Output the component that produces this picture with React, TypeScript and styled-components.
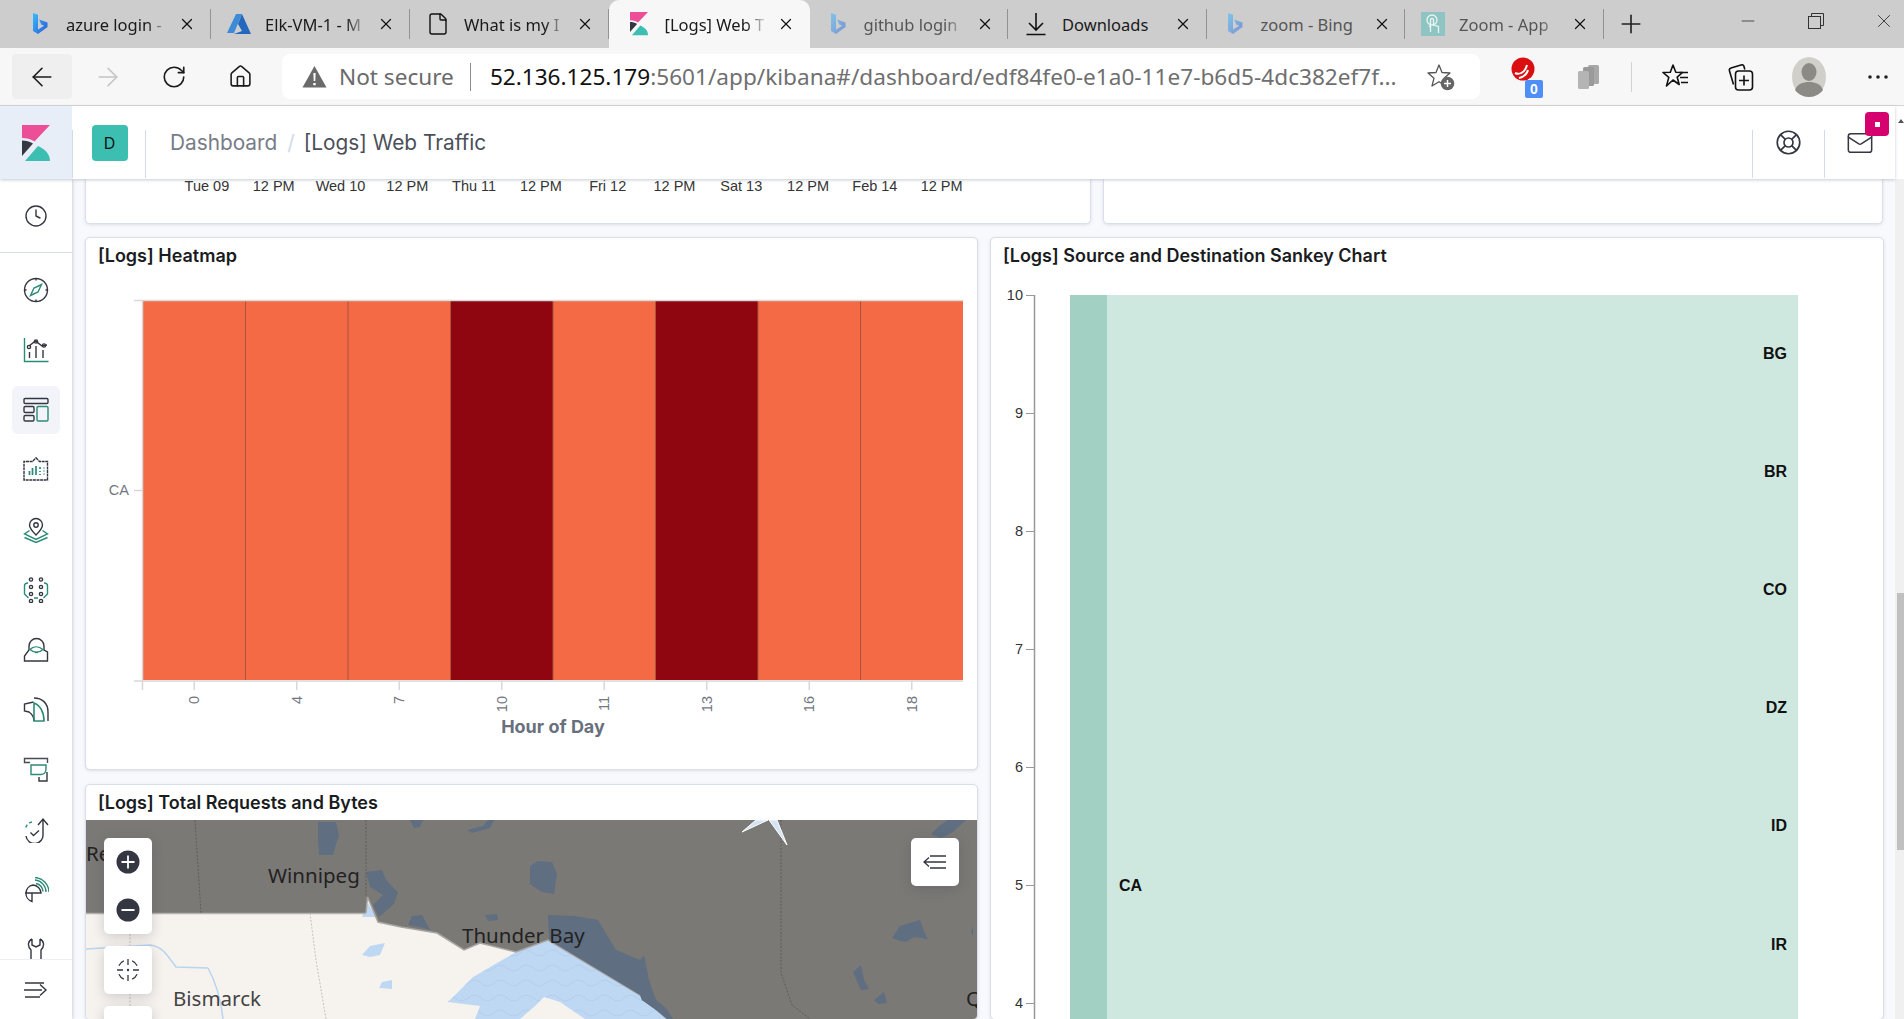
import React from 'react';
import styled, { createGlobalStyle } from 'styled-components';
import { ArrowLeft, ArrowRight, Clock, File, House, LifeBuoy, Mail, Minus, Plus, RotateCw, X } from 'lucide-react';

const Dark = '#343741';
const Teal = '#2b8a78';
const ChromeFont = '"Noto Sans", "Open Sans", sans-serif';
const UiFont = 'Inter, "Noto Sans", sans-serif';
const ChartFont = '"Liberation Sans", Arial, sans-serif';

const GlobalStyle = createGlobalStyle`
	html, body {
		margin: 0;
		padding: 0;
		overflow: hidden;
		background: #fff;
	}
`;

const Page = styled.div`
	width: 1904px;
	height: 1019px;
	display: flex;
	flex-direction: column;
	overflow: hidden;
`;

/* browser chrome */

const TabStrip = styled.div`
	height: 48px;
	flex: none;
	display: flex;
	padding-left: 12px;
	background: #cdcdcd;
	font-family: ${ChromeFont};
`;

const Tab = styled.div<{ active?: boolean; early?: boolean }>`
	position: relative;
	width: ${p => p.active ? 200.5 : p.early ? 199 : 198.5}px;
	flex: none;
	box-sizing: border-box;
	padding-left: ${p => p.active ? 1.5 : 0}px;
	display: flex;
	align-items: center;
	background: ${p => p.active ? '#f7f7f7' : 'transparent'};
	border-radius: 10px 10px 0 0;

	${p => p.active ? '' : `
		&::after {
			content: '';
			position: absolute;
			right: 0;
			top: 9px;
			height: 30px;
			width: 1px;
			background: #929292;
		}
	`}
`;

const TabIcon = styled.div<{ faded?: boolean }>`
	width: 26px;
	height: 26px;
	margin-left: 15px;
	flex: none;
	display: flex;
	align-items: center;
	justify-content: center;
	opacity: ${p => p.faded ? .5 : 1};
`;

const TabTitle = styled.div<{ dim?: boolean; plain?: boolean }>`
	width: 112px;
	margin-left: 13px;
	flex: none;
	white-space: nowrap;
	font-size: 16.5px;
	color: ${p => p.dim ? '#555' : '#1a1a1a'};
	${p => p.plain ? '' : `
		mask-image: linear-gradient(to right, #000 72%, transparent 92%);
	`}
`;

const TabClose = styled.div`
	width: 18px;
	flex: none;
	display: flex;
	justify-content: center;
	color: #111;
`;

const NewTab = styled.div`
	width: 54px;
	flex: none;
	display: flex;
	align-items: center;
	justify-content: center;
	color: #222;
`;

const WindowControls = styled.div`
	margin-left: auto;
	margin-right: -14px;
	display: flex;
`;

const WindowButton = styled.div`
	width: 68px;
	display: flex;
	align-items: center;
	justify-content: center;
	padding-bottom: 6px;
	color: #333;
`;

const Toolbar = styled.div`
	height: 58px;
	flex: none;
	display: flex;
	align-items: flex-start;
	padding: 6px 0 0 12px;
	box-sizing: border-box;
	background: #f7f7f7;
	border-bottom: 1px solid #d4d4d4;
	font-family: ${ChromeFont};
`;

const NavButton = styled.div<{ pressed?: boolean; disabled?: boolean }>`
	width: 60px;
	height: 45px;
	margin-right: 6px;
	flex: none;
	display: flex;
	align-items: center;
	justify-content: center;
	border-radius: 4px;
	background: ${p => p.pressed ? '#efefef' : 'transparent'};
	color: ${p => p.disabled ? '#c4c4c4' : '#1b1b1b'};
`;

const AddressBar = styled.div`
	width: 1198px;
	height: 45px;
	margin-left: 6px;
	flex: none;
	display: flex;
	align-items: center;
	box-sizing: border-box;
	padding-left: 20px;
	background: #fff;
	border-radius: 8px;
	font-size: 22.6px;
	white-space: nowrap;
`;

const NotSecure = styled.span`
	margin-left: 12px;
	color: #6a6a6a;
`;

const AddressDivider = styled.span`
	width: 1px;
	height: 28px;
	margin: 0 19px 0 16px;
	background: #8c8c8c;
`;

const Host = styled.span`
	color: #111;
`;

const UrlRest = styled.span`
	color: #6f6f6f;
`;

const FavAddSlot = styled.div`
	margin-left: 30px;
	display: flex;
`;

const ToolCell = styled.div<{ shift?: number }>`
	width: 66px;
	height: 45px;
	margin-left: ${p => p.shift || 0}px;
	flex: none;
	display: flex;
	align-items: center;
	justify-content: center;
`;

const ToolSep = styled.div`
	width: 1px;
	height: 30px;
	margin: 8px 10px 0 9px;
	flex: none;
	background: #d2d2d2;
`;

const ExtensionGroup = styled.div`
	margin-left: 10px;
	display: flex;
`;

/* kibana header */

const KibanaHeader = styled.div`
	position: relative;
	z-index: 2;
	height: 73px;
	flex: none;
	box-sizing: border-box;
	display: flex;
	align-items: flex-end;
	background: #fff;
	margin-right: 9px;
	box-shadow: 0 1px 3px rgba(152, 162, 179, .55);
	font-family: ${UiFont};
`;

const LogoBlock = styled.div`
	width: 72px;
	height: 73px;
	flex: none;
	display: flex;
	align-items: center;
	justify-content: center;
	background: #e7eef7;
`;

const HeaderSep = styled.div`
	width: 1px;
	height: 48px;
	margin-bottom: 1px;
	flex: none;
	background: #d3dae6;
`;

const SpaceCell = styled.div`
	height: 73px;
	width: 72px;
	flex: none;
	display: flex;
	align-items: center;
	justify-content: center;
`;

const SpaceBadge = styled.div`
	width: 36px;
	height: 36px;
	margin-left: 1px;
	display: flex;
	align-items: center;
	justify-content: center;
	border-radius: 4px;
	background: #3cbfb0;
	color: #111;
	font-size: 16px;
`;

const Breadcrumbs = styled.div`
	height: 73px;
	margin-left: 24px;
	flex: 1;
	display: flex;
	align-items: center;
	font-size: 20.8px;
	padding-bottom: 1px;
	box-sizing: border-box;
`;

const Crumb = styled.span<{ current?: boolean }>`
	color: ${p => p.current ? '#4b4f59' : '#777c87'};
`;

const CrumbSlash = styled.span`
	margin: 0 9px 0 10px;
	color: #d3dae6;
`;

const HeaderAction = styled.div<{ wide?: boolean }>`
	position: relative;
	height: 73px;
	width: ${p => p.wide ? 71 : 70}px;
	flex: none;
	display: flex;
	align-items: center;
	justify-content: center;
	color: ${Dark};
`;

const MailBadge = styled.div`
	position: absolute;
	top: 6px;
	right: 6px;
	width: 24px;
	height: 24px;
	display: flex;
	align-items: center;
	justify-content: center;
	border-radius: 4px;
	background: #d6006e;

	&::after {
		content: '';
		width: 5px;
		height: 5px;
		background: #fff;
	}
`;

/* page body */

const Body = styled.div`
	flex: 1;
	min-height: 0;
	display: flex;
`;

const Rail = styled.div`
	position: relative;
	z-index: 1;
	width: 72px;
	flex: none;
	display: flex;
	flex-direction: column;
	overflow: hidden;
	background: #fff;
	box-shadow: 1px 0 3px rgba(152, 162, 179, .45);
`;

const RecentSection = styled.div`
	height: 74px;
	flex: none;
	display: flex;
	align-items: center;
	justify-content: center;
	border-bottom: 1px solid #d3dae6;
	box-sizing: border-box;
	color: ${Dark};
`;

const RailList = styled.div`
	flex: 1;
	min-height: 0;
	padding-top: 7px;
	overflow: hidden;
	display: flex;
	flex-direction: column;
`;

const RailItem = styled.div<{ active?: boolean }>`
	height: 60px;
	flex: none;
	display: flex;
	align-items: center;
	justify-content: center;

	${p => p.active ? `
		&::before {
			content: '';
			position: absolute;
			width: 48px;
			height: 48px;
			border-radius: 6px;
			background: #f2f4f9;
		}
	` : ''}
`;

const RailFooter = styled.div`
	height: 59px;
	flex: none;
	display: flex;
	align-items: center;
	justify-content: center;
	border-top: 1px solid #eceff4;
	background: #fff;
`;

const RailSvg = styled.svg`
	position: relative;
	width: 26px;
	height: 26px;
	fill: none;
	stroke: ${Dark};
	stroke-width: 1.4;
`;

const Content = styled.div`
	flex: 1;
	min-width: 0;
	overflow: hidden;
	box-sizing: border-box;
	padding-left: 13px;
	background: #f8f9fc;
	display: flex;
	flex-direction: column;
	gap: 13px;
`;

const TopRow = styled.div`
	height: 45px;
	flex: none;
	display: flex;
	gap: 12px;
`;

const TopPanel = styled.div<{ wide?: boolean }>`
	width: ${p => p.wide ? 1006 : 780}px;
	height: 45px;
	flex: none;
	display: flex;
	box-sizing: border-box;
	padding-left: 87.500px;
	background: #fff;
	border: 1px solid #d9deea;
	border-top: 0;
	border-radius: 0 0 5px 5px;
	box-shadow: 0 1px 3px rgba(152, 162, 179, .3);
`;

const TimeLabel = styled.div`
	width: 66.8px;
	flex: none;
	text-align: center;
	font-family: ${ChartFont};
	font-size: 14.5px;
	line-height: 14px;
	color: #333;
	white-space: nowrap;
`;

const Columns = styled.div`
	flex: 1;
	min-height: 0;
	display: flex;
	gap: 12px;
`;

const Column = styled.div<{ wide?: boolean }>`
	width: ${p => p.wide ? 894 : 893}px;
	flex: none;
	display: flex;
	flex-direction: column;
	gap: 14px;
`;

const Panel = styled.div<{ height?: number }>`
	${p => p.height ? `height: ${p.height}px;` : ''}
	flex: none;
	box-sizing: border-box;
	background: #fff;
	border: 1px solid #d9deea;
	border-radius: 5px;
	box-shadow: 0 1px 3px rgba(152, 162, 179, .3);
	overflow: hidden;
`;

const PanelTitle = styled.div`
	height: 34px;
	box-sizing: border-box;
	padding: 6px 0 0 12px;
	font-family: ${UiFont};
	font-size: 18px;
	line-height: 24px;
	font-weight: 600;
	color: #1a1c21;
	white-space: nowrap;
`;

const ChartSvg = styled.svg`
	display: block;
	width: 100%;
`;

const Scrollbar = styled.div`
	width: 9px;
	flex: none;
	position: relative;
	background: #f0f0f0;
`;

const ScrollTrack = styled.div`
	height: 100%;
	box-sizing: border-box;
	padding: 414px 0 0 2px;
`;

const ScrollThumb = styled.div`
	height: 257px;
	background: #c0c0c0;
`;

const ScrollArrow = styled.div`
	position: absolute;
	top: -60px;
	left: 3px;
	width: 0;
	height: 0;
	border-left: 3px solid transparent;
	border-right: 3px solid transparent;
	border-bottom: 4px solid #555;
`;

/* map overlay parts */

const MapFrame = styled.div`
	position: relative;
	height: 199px;
	margin-top: 1px;
	overflow: hidden;
`;

const MapControls = styled.div`
	position: absolute;
	top: 18px;
	left: 18px;
	display: flex;
	flex-direction: column;
	gap: 12px;
`;

const MapCard = styled.div<{ tall?: boolean }>`
	width: 48px;
	height: ${p => p.tall ? 96 : 48}px;
	flex: none;
	display: flex;
	flex-direction: column;
	align-items: center;
	justify-content: space-around;
	background: #fff;
	border-radius: 5px;
	box-shadow: 0 3px 12px rgba(60, 60, 70, .22);
`;

const LayersCard = styled(MapCard)`
	position: absolute;
	top: 18px;
	right: 18px;
`;

const MapName = styled.text<{ tone?: string }>`
	font-family: "Noto Sans", "Open Sans", sans-serif;
	font-size: 20.5px;
	fill: ${p => p.tone || '#222'};
`;

const AxisText = styled.text<{ tone?: string }>`
	font-family: ${ChartFont};
	font-size: 14.5px;
	fill: ${p => p.tone || '#74777f'};
`;

const AxisTitle = styled.text`
	font-family: ${UiFont};
	font-size: 18px;
	font-weight: 700;
	fill: #69707d;
`;

const NodeLabel = styled.text`
	font-family: ${ChartFont};
	font-size: 16px;
	font-weight: 700;
	fill: #111;
`;

/* small drawings */

const BingIcon = ({ id }: { id: string }) => (
	<svg width="18" height="24" viewBox="0 0 18 24">
		<defs>
			<linearGradient id={id} x1="0" y1="0" x2="1" y2="1">
				<stop offset="0" stopColor="#37bdff" />
				<stop offset="1" stopColor="#2a5ad8" />
			</linearGradient>
		</defs>
		<path d="M2 1l5 1.800v14.600l6.200-3.600-3-1.400-2-4.800 8.300 2.900v4.600L7 22l-5-3z" fill={`url(#${id})`} />
	</svg>
);

const AzureIcon = () => (
	<svg width="26" height="22" viewBox="0 0 26 22">
		<path d="M10 1h6L8 20H1z" fill="#3d8ad6" />
		<path d="M16 1l9 20H8l8-3-4-7z" fill="#2468bd" />
	</svg>
);

const KibanaLogo = ({ size }: { size: number }) => (
	<svg width={size} height={size * 36 / 28} viewBox="0 0 28 36">
		<path d="M0 0h28L12.500 16.500C9 14 4.500 13 0 13z" fill="#ec4f98" />
		<path d="M0 15.500c4 0 7.800 1 11 3L0 31z" fill="#343741" />
		<path d="M3 36l13-15c7 3 12 8 12 15z" fill="#3cbfb0" />
	</svg>
);

const DownloadIcon = () => (
	<svg width="22" height="24" viewBox="0 0 22 24" fill="none" stroke="#111" strokeWidth="1.600">
		<path d="M11 1v16M4 11l7 7 7-7M1.500 22.500h19" />
	</svg>
);

const ZoomAppIcon = () => (
	<svg width="24" height="24" viewBox="0 0 24 24" fill="none" stroke="#e8f4f3" strokeWidth="1.300">
		<rect width="24" height="24" fill="#8ec5c2" stroke="none" />
		<circle cx="11" cy="8" r="5" />
		<path d="M9.500 20v-5l-1.500-1M9.500 15V8a1.500 1.500 0 0 1 3 0v5l5 1.500V21" />
	</svg>
);

const WarningIcon = () => (
	<svg width="25" height="23" viewBox="0 0 25 23">
		<path d="M12.500 1L24.500 22.500H.5z" fill="#6a6a6a" />
		<path d="M11.400 8h2.200l-.3 8h-1.600zM11.300 18h2.400v2.200h-2.400z" fill="#fff" />
	</svg>
);

const FavAddIcon = () => (
	<svg width="28" height="28" viewBox="0 0 28 28" fill="none">
		<path d="M12 2l3 7.500 8 .5-6 5.200 2 7.800-7-4.300-7 4.300 2-7.800-6-5.200 8-.5z" stroke="#555" strokeWidth="1.300" strokeLinejoin="round" />
		<circle cx="20.500" cy="20.500" r="6.800" fill="#666" />
		<path d="M17 20.500h7M20.500 17v7" stroke="#fff" strokeWidth="1.500" />
	</svg>
);

const ExtensionRed = () => (
	<svg width="40" height="42" viewBox="0 0 40 42">
		<circle cx="20" cy="13" r="11.500" fill="#d90f12" />
		<path d="M12 17c4 2 10 0 12-8M16 22c4-1 8-4 9-8" fill="none" stroke="#fff" strokeWidth="2" />
		<rect x="22" y="24" width="18" height="18" rx="2" fill="#4f8ef7" />
		<text x="31" y="38" textAnchor="middle" fontFamily={ChartFont} fontSize="14" fontWeight="700" fill="#fff">0</text>
	</svg>
);

const ExtensionCopies = () => (
	<svg width="24" height="26" viewBox="0 0 24 26">
		<rect x="11" y="1" width="11" height="19" rx="1.500" fill="#a8a8a8" />
		<rect x="6" y="3" width="11" height="19" rx="1.500" fill="#9a9a9a" />
		<rect x="1" y="7" width="11" height="18" rx="1.500" fill="#b4b4b4" />
	</svg>
);

const FavoritesIcon = () => (
	<svg width="27" height="28" viewBox="0 0 27 28" fill="none" stroke="#111" strokeWidth="1.600">
		<path d="M11 2l2.800 7.200 6.700.3-5.300 4.700 2 7.300L11 17l-6.500 6 2.300-8.600L1 9.500l7.300-.3z" strokeLinejoin="round" />
		<path d="M17.500 9.500H26M18 14.500h8M19 19.500h7" />
	</svg>
);

const CollectionsIcon = () => (
	<svg width="26" height="30" viewBox="0 0 26 30" fill="none" stroke="#111" strokeWidth="1.600">
		<path d="M5.500 22.500L1.500 9c-.5-1.500 0-2.500 1.500-3l10-3c1.500-.4 2.600 0 3 1.500l.8 3" />
		<rect x="7.500" y="9" width="17" height="19" rx="3" />
		<path d="M16 13.500v10M11 18.500h10" />
	</svg>
);

const Avatar = () => (
	<svg width="34" height="40" viewBox="0 0 34 40">
		<ellipse cx="17" cy="20" rx="17" ry="20" fill="#d0cfca" />
		<ellipse cx="17" cy="15" rx="7.500" ry="9" fill="#8c8a85" />
		<path d="M3 33c2-6 8-8 14-8s12 2 14 8c-3 4-8 7-14 7S6 37 3 33z" fill="#8c8a85" />
	</svg>
);

const DotsIcon = () => (
	<svg width="22" height="6" viewBox="0 0 22 6" fill="#222">
		<circle cx="3" cy="3" r="1.800" />
		<circle cx="11" cy="3" r="1.800" />
		<circle cx="19" cy="3" r="1.800" />
	</svg>
);

const RestoreIcon = () => (
	<svg width="16" height="16" viewBox="0 0 16 16" fill="none" stroke="#333" strokeWidth="1">
		<rect x=".5" y="3.500" width="12" height="12" />
		<path d="M3.500 3.500V.5h12v12h-3" />
	</svg>
);

const RoundGlyph = ({ minus }: { minus?: boolean }) => (
	<svg width="24" height="24" viewBox="0 0 24 24">
		<circle cx="12" cy="12" r="11.500" fill={Dark} />
		<path d={minus ? 'M5.500 12h13' : 'M5.500 12h13M12 5.500v13'} stroke="#fff" strokeWidth="1.800" />
	</svg>
);

const LocateIcon = () => (
	<svg width="24" height="24" viewBox="0 0 24 24" fill="none" stroke={Dark} strokeWidth="1.300">
		<path d="M12 1v6M12 17v6M1 12h6M17 12h6" />
		<path d="M16.200 2.900A10 10 0 0 1 21.100 7.800M21.100 16.200A10 10 0 0 1 16.200 21.100M7.800 21.100A10 10 0 0 1 2.900 16.200M2.900 7.800A10 10 0 0 1 7.800 2.900" />
		<circle cx="12" cy="12" r="1.200" fill={Dark} stroke="none" />
	</svg>
);

const LayersToggleIcon = () => (
	<svg width="24" height="18" viewBox="0 0 24 18" fill="none" stroke={Dark} strokeWidth="1.300">
		<path d="M7 3H23M1 9h22M7 15h16M6 4.500L1 9l5 4.500" />
	</svg>
);

const railIcons = [
	// discover
	<RailSvg viewBox="0 0 26 26" key="discover">
		<circle cx="13" cy="13" r="11.500" />
		<path d="M13 1.500v2M13 22.500v2M1.500 13h2M22.500 13h2" />
		<path d="M18.500 7.500L15 15l-7.500 3.500L11 11z" stroke={Teal} />
	</RailSvg>,
	// visualize
	<RailSvg viewBox="0 0 26 26" key="visualize">
		<path d="M1.500 1v23.500h24" stroke={Teal} />
		<path d="M6 9l6.500-5L19 9l5-1" />
		<circle cx="6" cy="10" r="1.600" /><circle cx="13" cy="4.500" r="1.600" /><circle cx="21" cy="8.500" r="1.600" />
		<path d="M6.500 15v6M13 9v12M20 13v8" />
	</RailSvg>,
	// dashboard
	<RailSvg viewBox="0 0 26 26" key="dashboard">
		<rect x="1" y="1.500" width="24" height="5" rx="1.200" />
		<rect x="1" y="9.500" width="10" height="6" rx="1.200" />
		<rect x="1" y="18.500" width="10" height="5.500" rx="1.200" />
		<rect x="14" y="9.500" width="11" height="14.500" rx="1.200" stroke={Teal} />
	</RailSvg>,
	// canvas
	<RailSvg viewBox="0 0 26 26" key="canvas">
		<path d="M13 .8l3.500 3.700h8v18.500H1V4.500h8.500z" strokeDasharray="3 .6" />
		<path d="M6.500 18v-4M9.500 18v-7M13 18v-9M17 10v2M17 14v1M17 17v1M20.500 11h1M20.500 14h1M20.500 17h1" stroke={Teal} strokeWidth="1.700" />
	</RailSvg>,
	// maps
	<RailSvg viewBox="0 0 26 26" key="maps">
		<path d="M13 18c-4-4-6.500-7-6.500-10a6.500 6.500 0 0 1 13 0c0 3-2.500 6-6.500 10z" />
		<circle cx="13" cy="8" r="2.200" />
		<path d="M6.500 13.500L1.500 17l11.500 5.500L24.500 17l-5-3.500M1.500 20.500L13 25.500l11.500-5" stroke={Teal} />
	</RailSvg>,
	// machine learning
	<RailSvg viewBox="0 0 26 26" key="ml">
		<circle cx="8" cy="2.500" r="1.600" /><circle cx="18" cy="2.500" r="1.600" />
		<circle cx="8" cy="10" r="1.600" /><circle cx="18" cy="10" r="1.600" />
		<circle cx="8" cy="17" r="1.600" /><circle cx="18" cy="17" r="1.600" />
		<circle cx="8" cy="24" r="1.600" /><circle cx="18" cy="24" r="1.600" />
		<path d="M5 6C2 6 1.500 7 1.500 9v8l4 4M21 6c3 0 3.500 1 3.500 3v8l-4 4M11 21h4" stroke={Teal} />
	</RailSvg>,
	// security
	<RailSvg viewBox="0 0 26 26" key="siem">
		<path d="M6 13V9a7.500 7.500 0 0 1 15 0v4l3.500 2v9H1.500v-5z" />
		<path d="M7 12.500c3-3 8-4 13 0-4 3.500-9 3.500-13 0z" stroke={Teal} />
		<path d="M12 15.500h3" stroke={Teal} />
	</RailSvg>,
	// logs
	<RailSvg viewBox="0 0 26 26" key="logs">
		<path d="M11 1c8 0 14 5 14 14v9M11 24c0-4-2-7-5-9l-4.500-1V7l9-2" />
		<path d="M11 6c6 2 10 9 10 18H11z" stroke={Teal} strokeWidth="1.600" />
	</RailSvg>,
	// apm
	<RailSvg viewBox="0 0 26 26" key="apm">
		<path d="M7 5.500H1.500V1.500h23v4.500" strokeOpacity=".9" />
		<path d="M8 8h15v4c0 4-3 5.500-5 5.500H8z" stroke={Teal} />
		<path d="M16 20v4h8V15" />
	</RailSvg>,
	// uptime
	<RailSvg viewBox="0 0 26 26" key="uptime">
		<path d="M20 3v14a8.500 8.500 0 0 1-17 2M15 8l5-6 5 6" />
		<path d="M9 5a8 8 0 0 0-6.500 7" stroke={Teal} strokeDasharray="3 2.500" />
		<path d="M7.500 15.500l3 3 5.500-5" />
	</RailSvg>,
	// signals
	<RailSvg viewBox="0 0 26 26" key="signals">
		<path d="M10 8a8.500 8.500 0 0 0-1 16.500V16h9a8.500 8.500 0 0 0-8-8zM9 16H2" />
		<path d="M12 3a12 12 0 0 1 11 12M12 .5A15 15 0 0 1 26 15M13 6.500a9 9 0 0 1 7 8" stroke={Teal} />
	</RailSvg>,
	// dev tools
	<RailSvg viewBox="0 0 26 26" key="wrench">
		<path d="M9 2C5 4 4 9 8 13v11M17 2c4 2 5 7 1 11v11M9 2v6l4 2 4-2V2" />
	</RailSvg>,
];

const tabs = [
	{ icon: <BingIcon id="b1" />, title: 'azure login -', early: true },
	{ icon: <AzureIcon />, title: 'Elk-VM-1 - M', early: true },
	{ icon: <File size={24} strokeWidth={1.4} color="#111" />, title: 'What is my I', early: true },
	{ icon: <KibanaLogo size={18} />, title: '[Logs] Web T', active: true },
	{ icon: <BingIcon id="b2" />, title: 'github login', dim: true, faded: true },
	{ icon: <DownloadIcon />, title: 'Downloads', plain: true },
	{ icon: <BingIcon id="b3" />, title: 'zoom - Bing', dim: true, faded: true, plain: true },
	{ icon: <ZoomAppIcon />, title: 'Zoom - App', dim: true },
];

const timeLabels = ['Tue 09', '12 PM', 'Wed 10', '12 PM', 'Thu 11', '12 PM', 'Fri 12', '12 PM', 'Sat 13', '12 PM', 'Feb 14', '12 PM'];

const heatCells = [false, false, false, true, false, true, false, false];
const hourLabels = ['0', '4', '7', '10', '11', '13', '16', '18'];
const CellWidth = 102.5;
const HeatLeft = 143;

const sankeyTicks = [10, 9, 8, 7, 6, 5, 4];
const sankeyNodes = [['BG', 359], ['BR', 477], ['CO', 595], ['DZ', 713], ['ID', 831], ['IR', 950]] as const;

const Heatmap = () => (
	<ChartSvg viewBox="86 272 891 497" height="497">
		{heatCells.map((dark, i) => (
			<rect key={i} x={HeatLeft + i * CellWidth} y={301} width={CellWidth} height={379} fill={dark ? '#8f0610' : '#f46a45'} />
		))}
		{heatCells.slice(1).map((_, i) => (
			<line key={i} x1={HeatLeft + (i + 1) * CellWidth} x2={HeatLeft + (i + 1) * CellWidth} y1={301} y2={680} stroke="#a9543c" strokeWidth="1" />
		))}
		<path d="M134 300.500H963M134 681H963M142.500 300V690M134 490.500H142" stroke="#d8d8d8" strokeWidth="1.500" fill="none" />
		<AxisText x={129} y={495} textAnchor="end">CA</AxisText>
		{hourLabels.map((label, i) => {
			const x = HeatLeft + (i + .5) * CellWidth;
			return (
				<React.Fragment key={label}>
					<line x1={x} x2={x} y1={681} y2={690} stroke="#d8d8d8" strokeWidth="1.500" />
					<AxisText x={x + 5} y={696} textAnchor="end" transform={`rotate(-90 ${x + 5} 696)`}>{label}</AxisText>
				</React.Fragment>
			);
		})}
		<AxisTitle x={553} y={733} textAnchor="middle">Hour of Day</AxisTitle>
	</ChartSvg>
);

const Sankey = () => (
	<ChartSvg viewBox="991 272 892 747" height="747">
		<rect x={1070} y={295} width={728} height={724} fill="#cfe8df" />
		<rect x={1070} y={295} width={37} height={724} fill="#a2d0c2" />
		<line x1={1034.500} x2={1034.500} y1={295} y2={1019} stroke="#999" strokeWidth="1.500" />
		{sankeyTicks.map((t, i) => (
			<React.Fragment key={t}>
				<line x1={1026} x2={1034} y1={295.500 + i * 118} y2={295.500 + i * 118} stroke="#999" />
				<AxisText x={1023} y={300 + i * 118} textAnchor="end" tone="#333">{t}</AxisText>
			</React.Fragment>
		))}
		<NodeLabel x={1119} y={891}>CA</NodeLabel>
		{sankeyNodes.map(([name, y]) => (
			<NodeLabel key={name} x={1787} y={y} textAnchor="end">{name}</NodeLabel>
		))}
	</ChartSvg>
);

const MapDrawing = () => (
	<svg width="891" height="199" viewBox="86 820 891 199" style={{ display: 'block' }}>
		<defs>
			<pattern id="waves" width="26" height="15" patternUnits="userSpaceOnUse">
				<path d="M0 8q6.500-6 13 0t13 0" fill="none" stroke="#a9c6e6" strokeWidth="1" />
			</pattern>
		</defs>
		<rect x="86" y="820" width="891" height="199" fill="#f6f3ef" />
		<path d="M86 949l65-4q10 2 16 10t9 12l32 1M208 968q12 22 15 51" fill="none" stroke="#b9d4f1" strokeWidth="1.500" />
		<path d="M362 917l6-14 8 14zM362 955l8-9 15-3-5 12-10 2zM379 988l3-6 10-2v9z" fill="#bed8f3" />
		<path d="M130 913v106M310 913l6 47 10 59M464 990l36-7 16-31M448 1002l16-12" fill="none" stroke="#c4c0bb" strokeWidth="1" strokeDasharray="2 1.500" />
		<path d="M448 1002L473 977L516 952L548 940L640 995L667 1019H585L560 1002L544 997L535 1006L520 1019H475L480 1006z" fill="#bed8f3" />
		<path d="M448 1002L473 977L516 952L548 940L640 995L667 1019H585L560 1002L544 997L535 1006L520 1019H475L480 1006z" fill="url(#waves)" opacity=".6" />
		<path d="M86 820H977V1019H667L656 1010L642 1000L640 995L548 940L516 952L480 943L464 950L437 933L401 927L378 922L367.500 897L366 913H86z" fill="#7b7976" />
		<path d="M366 913L367.500 897L378 922L401 927L437 933L464 950L480 943L516 952L548 940L640 995L667 1019" fill="none" stroke="#a8a6a4" strokeWidth="1.500" />
		<path d="M86 913.500H366" stroke="#b5b3b0" strokeWidth="1.500" />
		<path d="M549 940L548 915L575 916L598 920L616 950L640 960L644 955L649 980L656 1000L666 1008L673 1019H667L656 1010L642 1000L640 995z" fill="#5f6e80" />
		<g fill="#5f6e80">
			<path d="M318 822h18l3 14-3 8-3 11h-14l-1-16z" />
			<path d="M410 820h13l-3 7-6 1zM467 830l16-4 5-6h6l-4 8-18 5z" />
			<path d="M530 866l8-5 14 1 5 12-3 20-12-2-12-8z" />
			<path d="M366 872l16-2 4 10 12 12-4 12-15 13-6-12 10-10-13-8z" />
			<path d="M408 925l4-9 10-1 8 15-10-3zM485 915l12-1 1 6-10 1z" />
			<path d="M892 938l8-12 20-6 5 14 3 5-14-2-8 5-6-1zM853 972l8-7 3 15 5 9-8 1zM874 1000l10-8 3 11-9 1zM931 834l8-8 9-6h18l-13 12-12 6zM973 926v10l-2-4z" />
		</g>
		<path d="M781 820V973L792 1005L810 1019M195 820L201 913M366 820V897" fill="none" stroke="#5f5d5b" strokeWidth="1" strokeDasharray="2 1.500" />
		<path d="M742 832L756 820H768ZM769 820H777L787 845Z" fill="#d5e4f5" stroke="#fff" strokeWidth="1" />
		<MapName x={86} y={861}>Re</MapName>
		<MapName x={268} y={883}>Winnipeg</MapName>
		<MapName x={462} y={943}>Thunder Bay</MapName>
		<MapName x={173} y={1006} tone="#444">Bismarck</MapName>
		<MapName x={966} y={1006}>Q</MapName>
	</svg>
);

const App = () => (
	<Page>
		<GlobalStyle />
		<TabStrip>
			{tabs.map(t => (
				<Tab key={t.title} active={t.active} early={t.early}>
					<TabIcon faded={t.faded}>{t.icon}</TabIcon>
					<TabTitle dim={t.dim} plain={t.plain}>{t.title}</TabTitle>
					<TabClose><X size={20} strokeWidth={1.6} /></TabClose>
				</Tab>
			))}
			<NewTab><Plus size={30} strokeWidth={1.3} /></NewTab>
			<WindowControls>
				<WindowButton><Minus size={20} strokeWidth={1} /></WindowButton>
				<WindowButton><RestoreIcon /></WindowButton>
				<WindowButton><X size={22} strokeWidth={1} /></WindowButton>
			</WindowControls>
		</TabStrip>
		<Toolbar>
			<NavButton pressed><ArrowLeft size={30} strokeWidth={1.3} /></NavButton>
			<NavButton disabled><ArrowRight size={30} strokeWidth={1.3} /></NavButton>
			<NavButton><RotateCw size={26} strokeWidth={1.5} /></NavButton>
			<NavButton><House size={25} strokeWidth={1.5} /></NavButton>
			<AddressBar>
				<WarningIcon />
				<NotSecure>Not secure</NotSecure>
				<AddressDivider />
				<Host>52.136.125.179</Host>
				<UrlRest>:5601/app/kibana#/dashboard/edf84fe0-e1a0-11e7-b6d5-4dc382ef7f...</UrlRest>
				<FavAddSlot><FavAddIcon /></FavAddSlot>
			</AddressBar>
			<ExtensionGroup>
				<ToolCell><ExtensionRed /></ToolCell>
				<ToolCell><ExtensionCopies /></ToolCell>
				<ToolSep />
				<ToolCell><FavoritesIcon /></ToolCell>
				<ToolCell><CollectionsIcon /></ToolCell>
				<ToolCell shift={2}><Avatar /></ToolCell>
				<ToolCell shift={3}><DotsIcon /></ToolCell>
			</ExtensionGroup>
		</Toolbar>
		<KibanaHeader>
			<LogoBlock><KibanaLogo size={28} /></LogoBlock>
			<HeaderSep />
			<SpaceCell><SpaceBadge>D</SpaceBadge></SpaceCell>
			<HeaderSep />
			<Breadcrumbs>
				<Crumb>Dashboard</Crumb>
				<CrumbSlash>/</CrumbSlash>
				<Crumb current>[Logs] Web Traffic</Crumb>
			</Breadcrumbs>
			<HeaderSep />
			<HeaderAction wide><LifeBuoy size={27} strokeWidth={1.5} /></HeaderAction>
			<HeaderSep />
			<HeaderAction>
				<Mail size={28} strokeWidth={1.3} />
				<MailBadge />
			</HeaderAction>
		</KibanaHeader>
		<Body>
			<Rail>
				<RecentSection><Clock size={24} strokeWidth={1.4} /></RecentSection>
				<RailList>
					{railIcons.map((icon, i) => (
						<RailItem key={i} active={i === 2}>{icon}</RailItem>
					))}
				</RailList>
				<RailFooter>
					<RailSvg viewBox="0 0 26 26">
						<path d="M2 6h19M1 13h18M2 20h15M17 7.500L23 13l-6 5.500" />
					</RailSvg>
				</RailFooter>
			</Rail>
			<Content>
				<TopRow>
					<TopPanel wide>
						{timeLabels.map((l, i) => <TimeLabel key={i}>{l}</TimeLabel>)}
					</TopPanel>
					<TopPanel />
				</TopRow>
				<Columns>
					<Column>
						<Panel height={533}>
							<PanelTitle>[Logs] Heatmap</PanelTitle>
							<Heatmap />
						</Panel>
						<Panel>
							<PanelTitle>[Logs] Total Requests and Bytes</PanelTitle>
							<MapFrame>
								<MapDrawing />
								<MapControls>
									<MapCard tall>
										<RoundGlyph />
										<RoundGlyph minus />
									</MapCard>
									<MapCard><LocateIcon /></MapCard>
									<MapCard />
								</MapControls>
								<LayersCard><LayersToggleIcon /></LayersCard>
							</MapFrame>
						</Panel>
					</Column>
					<Column wide>
						<Panel>
							<PanelTitle>[Logs] Source and Destination Sankey Chart</PanelTitle>
							<Sankey />
						</Panel>
					</Column>
				</Columns>
			</Content>
			<Scrollbar>
				<ScrollArrow />
				<ScrollTrack><ScrollThumb /></ScrollTrack>
			</Scrollbar>
		</Body>
	</Page>
);

export default App;
